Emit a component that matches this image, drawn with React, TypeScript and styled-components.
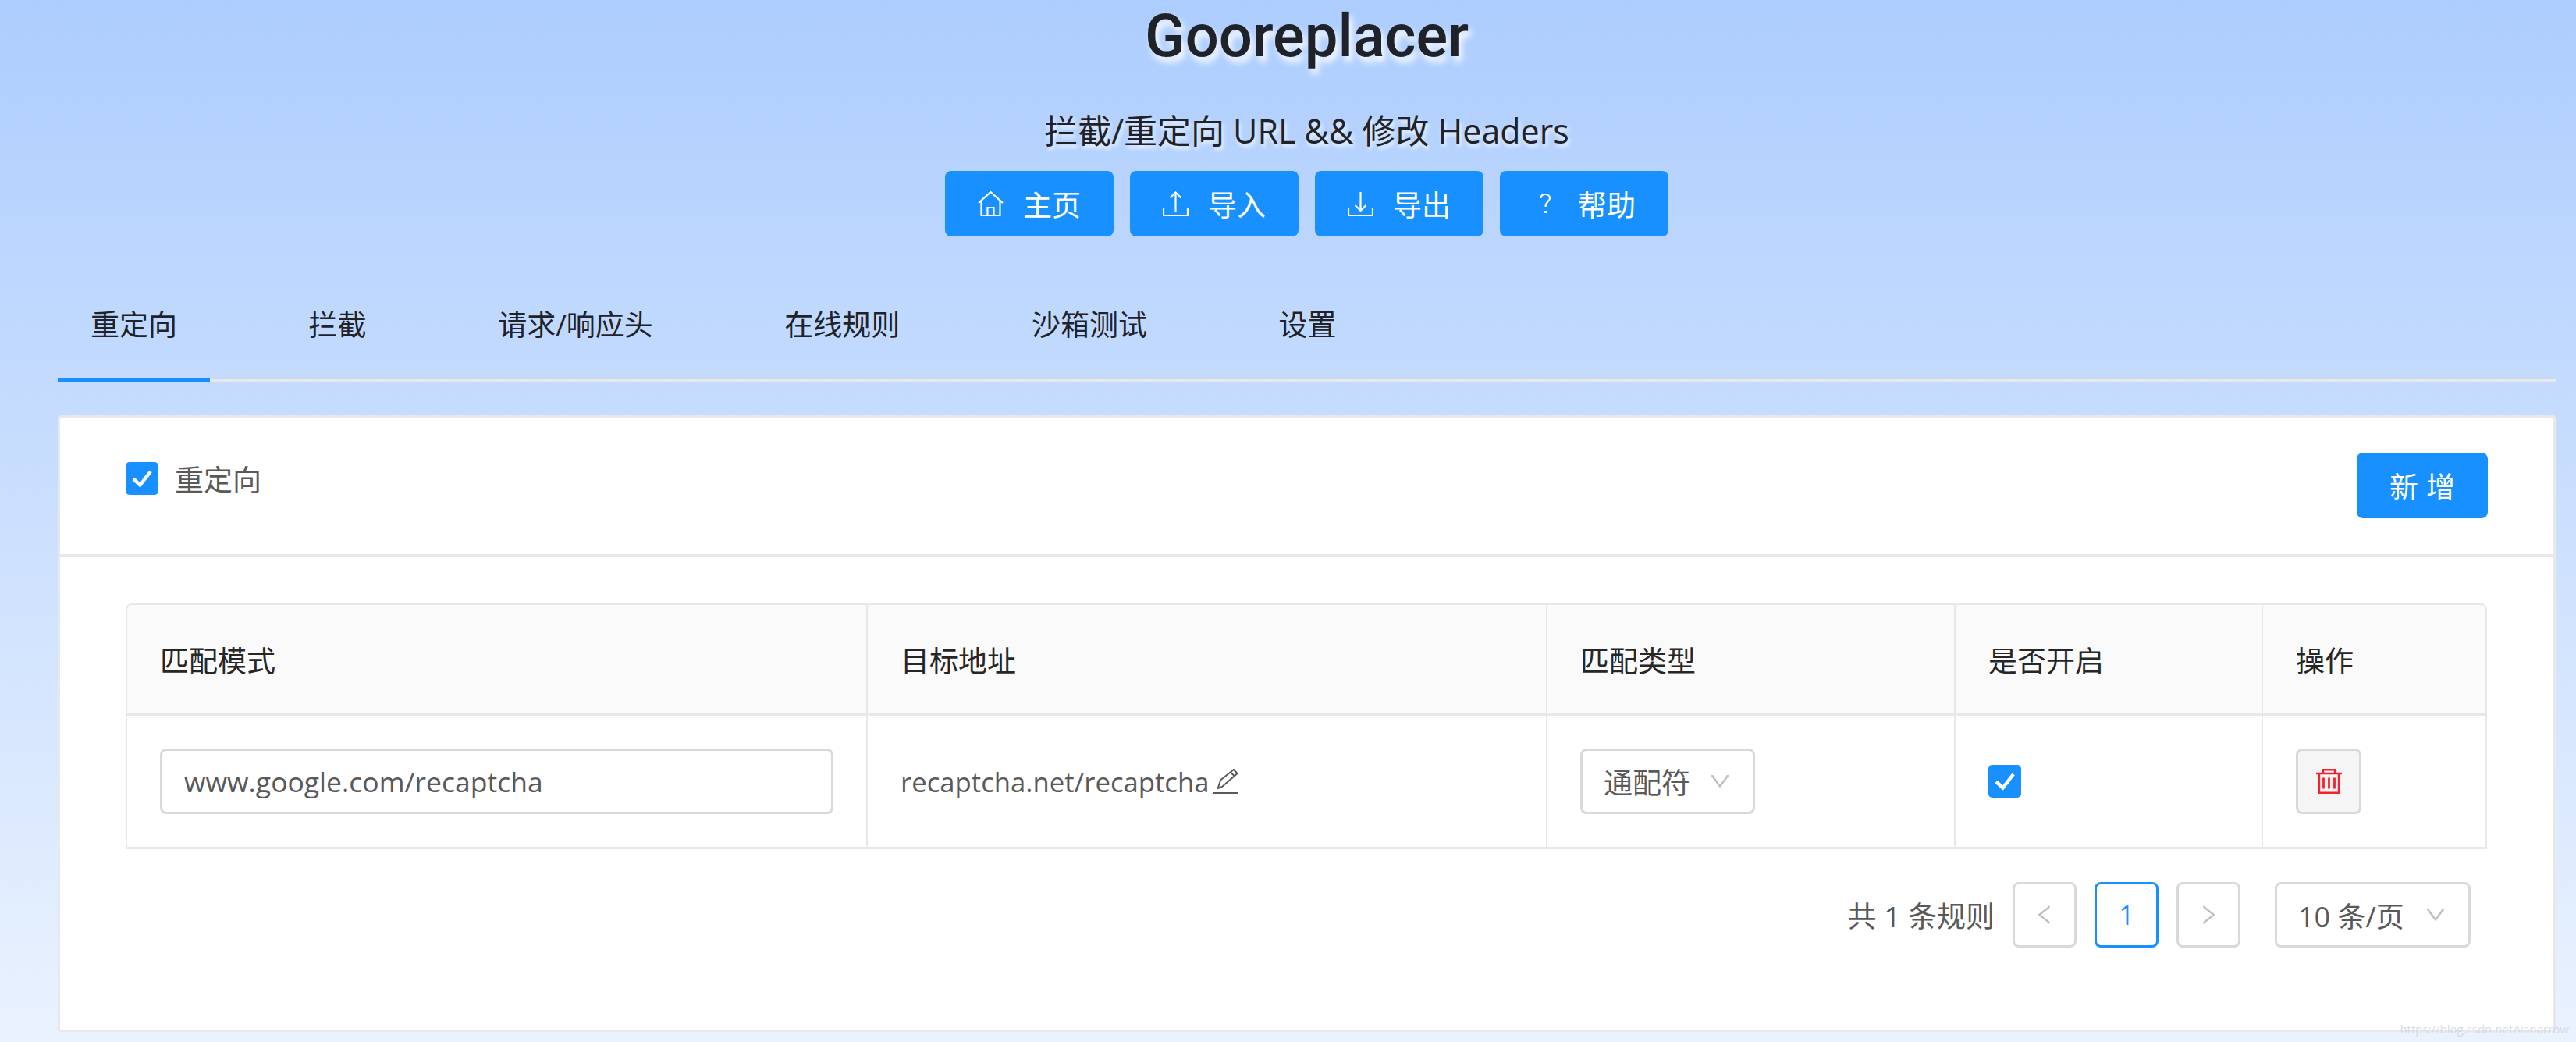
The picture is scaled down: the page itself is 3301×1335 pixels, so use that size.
import React from 'react';
import styled, { createGlobalStyle } from 'styled-components';
import { AiOutlineLeft, AiOutlineRight, AiOutlineDown } from 'react-icons/ai';

const FONT = '"Open Sans", "Noto Sans CJK SC", sans-serif';
const BLUE = '#1890ff';
const LINE = '#e8e8e8';

const GlobalStyle = createGlobalStyle`
  html, body {
    margin: 0;
    padding: 0;
  }
  body {
    font-family: ${FONT};
  }
`;

const Page = styled.div`
  position: relative;
  box-sizing: border-box;
  width: 3301px;
  height: 1335px;
  overflow: hidden;
  padding: 0 26px 13px 74px;
  display: flex;
  flex-direction: column;
  background: linear-gradient(180deg, #adcdfe 0%, #eaf2fe 100%);
`;

// --- Header ---

const Header = styled.header`
  display: flex;
  flex-direction: column;
  align-items: center;
  height: 303px;
`;

const Title = styled.h1`
  margin: 0;
  height: 147px;
  font-family: Roboto, sans-serif;
  font-size: 76px;
  line-height: 92px;
  font-weight: 500;
  color: #1f2329;
  text-shadow: 4px 7px 8px rgba(255, 255, 255, 0.95);
`;

const Subtitle = styled.h2`
  margin: 0;
  height: 72px;
  font-size: 43px;
  line-height: 42px;
  font-weight: 400;
  color: #1f2329;
  text-shadow: 2px 4px 5px rgba(255, 255, 255, 0.85);
`;

const HeaderButtons = styled.div`
  display: flex;
  gap: 21px;
`;

const PrimaryButton = styled.button<{ $width: number }>`
  display: inline-flex;
  align-items: center;
  justify-content: center;
  height: 84px;
  width: ${({ $width }) => $width}px;
  padding: 0;
  border: 0;
  border-radius: 8px;
  background: ${BLUE};
  color: #fff;
  font-family: ${FONT};
  font-size: 37px;
`;

const ButtonGlyph = styled.svg`
  width: 33px;
  height: 32px;
  margin-right: 25px;
  fill: none;
  stroke: #fff;
  stroke-width: 2.2;
`;

// --- Tabs ---

const TabBar = styled.nav`
  display: flex;
  height: 186px;
  box-sizing: border-box;
  border-bottom: 3px solid ${LINE};
  gap: 84.6px;
`;

const Tab = styled.div<{ $active?: boolean }>`
  box-sizing: border-box;
  height: ${({ $active }) => ($active ? '186px' : '183px')};
  padding: 91px 42px 0;
  margin-bottom: -3px;
  display: flex;
  align-items: flex-start;
  font-size: 37px;
  line-height: 44px;
  color: #1f2329;
  border-bottom: ${({ $active }) => ($active ? `5px solid ${BLUE}` : '0')};
`;

// --- Card ---

const Card = styled.section`
  flex: 1;
  margin-top: 43px;
  box-sizing: border-box;
  background: #fff;
  border: 3px solid ${LINE};
  border-radius: 4px;
  display: flex;
  flex-direction: column;
`;

const CardHead = styled.div`
  box-sizing: border-box;
  height: 178px;
  padding: 45px 84px 0 84px;
  border-bottom: 3px solid ${LINE};
  display: flex;
  justify-content: space-between;
  align-items: flex-start;
`;

const CheckLabel = styled.label`
  display: flex;
  align-items: center;
  gap: 21px;
  margin-top: 6px;
  font-size: 37px;
  color: #595959;
`;

const CheckBox = styled.span`
  display: inline-flex;
  width: 42px;
  height: 42px;
  border-radius: 5px;
  background: ${BLUE};
`;

const AddButton = styled(PrimaryButton)`
  letter-spacing: 10px;
  padding-left: 10px;
`;

const CardBody = styled.div`
  flex: 1;
  padding: 60px 84px 0 84px;
`;

// --- Table ---

const Table = styled.div`
  box-sizing: border-box;
  width: 3026px;
  border: solid ${LINE};
  border-width: 2px 2px 3px 2px;
  border-radius: 8px 8px 0 0;
  overflow: hidden;
`;

const TableRow = styled.div<{ $head?: boolean }>`
  display: grid;
  grid-template-columns: 949px 871px 523px 394px 285px;
  height: ${({ $head }) => ($head ? '142px' : '168px')};
  background: ${({ $head }) => ($head ? '#fafafa' : '#fff')};
  border-bottom: ${({ $head }) => ($head ? `3px solid ${LINE}` : '0')};
  box-sizing: border-box;
`;

const Cell = styled.div<{ $head?: boolean }>`
  box-sizing: border-box;
  padding: 0 42px;
  display: flex;
  align-items: center;
  border-right: 2px solid ${LINE};
  font-size: ${({ $head }) => ($head ? '37px' : '34.7px')};
  color: ${({ $head }) => ($head ? '#262626' : '#595959')};

  &:last-child {
    border-right: 0;
  }
`;

const TextInput = styled.div`
  box-sizing: border-box;
  flex: 1;
  height: 84px;
  padding: 0 28px;
  display: flex;
  align-items: center;
  border: 3px solid #d9d9d9;
  border-radius: 8px;
  font-size: 35.5px;
  color: #595959;
`;

const EditGlyph = styled.svg`
  width: 32px;
  height: 32px;
  margin-left: 4px;
  flex: none;
  fill: none;
  stroke: #595959;
  stroke-width: 2;
`;

const SelectBox = styled.div<{ $width: number }>`
  box-sizing: border-box;
  width: ${({ $width }) => $width}px;
  height: 84px;
  padding: 0 26px 0 27px;
  display: flex;
  align-items: center;
  justify-content: space-between;
  border: 3px solid #d9d9d9;
  border-radius: 8px;
  font-size: 37px;
  color: #595959;
`;

const SelectArrow = styled.span`
  display: inline-flex;
  font-size: 32px;
  color: #bfbfbf;
`;

const DeleteButton = styled.button`
  box-sizing: border-box;
  width: 84px;
  height: 84px;
  padding: 0;
  display: flex;
  align-items: center;
  justify-content: center;
  background: #f5f5f5;
  border: 3px solid #d9d9d9;
  border-radius: 8px;
`;

const TrashGlyph = styled.svg`
  width: 33px;
  height: 32px;
  fill: none;
  stroke: #f5222d;
  stroke-width: 2.4;
`;

// --- Pagination ---

const Pager = styled.div`
  display: flex;
  justify-content: flex-end;
  align-items: center;
  margin-top: 42px;
  padding-right: 22px;
  gap: 23px;
`;

const PagerTotal = styled.span`
  font-size: 37px;
  color: #595959;
`;

const PagerItem = styled.div<{ $active?: boolean }>`
  box-sizing: border-box;
  width: 82px;
  height: 84px;
  display: flex;
  align-items: center;
  justify-content: center;
  border: 3px solid ${({ $active }) => ($active ? BLUE : '#d9d9d9')};
  border-radius: 8px;
  color: ${({ $active }) => ($active ? BLUE : '#bfbfbf')};
  font-size: ${({ $active }) => ($active ? '34px' : '32px')};
`;

const PagerSelect = styled(SelectBox)`
  margin-left: 21px;
  font-size: 36px;
`;

const Watermark = styled.div`
  position: absolute;
  right: 9px;
  bottom: 8px;
  font-size: 15px;
  line-height: 18px;
  color: rgba(205, 212, 225, 0.8);
`;

const CheckMark = () => (
  <svg width="42" height="42" viewBox="0 0 42 42">
    <path d="M10 21.5L18.5 29.5L32 12" fill="none" stroke="#fff" strokeWidth="4.5" />
  </svg>
);

const HomeIcon = () => (
  <ButtonGlyph viewBox="0 0 33 32">
    <path d="M1 15L16.5 1L32 15" />
    <path d="M4.5 12V31H28.5V12" />
    <path d="M12.5 31V21H20.5V31" />
  </ButtonGlyph>
);

const UploadIcon = () => (
  <ButtonGlyph viewBox="0 0 33 32">
    <path d="M1 21V31H32V21" />
    <path d="M16.5 26V1.5" />
    <path d="M9.5 8.5L16.5 1.5L23.5 8.5" />
  </ButtonGlyph>
);

const DownloadIcon = () => (
  <ButtonGlyph viewBox="0 0 33 32">
    <path d="M1 21V31H32V21" />
    <path d="M16.5 1V25" />
    <path d="M9.5 18L16.5 25L23.5 18" />
  </ButtonGlyph>
);

const QuestionIcon = () => (
  <ButtonGlyph viewBox="0 0 33 32">
    <path d="M10.5 9C10.5 5.5 13 4 16 4C19.5 4 22 6 22 9C22 13 16.5 13.5 16.5 20" />
    <path d="M16.5 25V28" strokeWidth="3" />
  </ButtonGlyph>
);

const EditIcon = () => (
  <EditGlyph viewBox="0 0 32 32">
    <path d="M0 31H32" />
    <path d="M6.7 25L10 14.5L27 1L31.5 6L12 23Z" />
    <path d="M23 4.5L28 9.5" />
  </EditGlyph>
);

const TrashIcon = () => (
  <TrashGlyph viewBox="0 0 33 32">
    <path d="M9 5V1.2H24V5" />
    <path d="M0 6H33" />
    <path d="M4 6V30.8H29V6" />
    <path d="M9.5 11.5V25.5M16.5 11.5V25.5M23.5 11.5V25.5" strokeWidth="2.8" />
  </TrashGlyph>
);

const navButtons = [
  { icon: <HomeIcon />, label: '主页' },
  { icon: <UploadIcon />, label: '导入' },
  { icon: <DownloadIcon />, label: '导出' },
  { icon: <QuestionIcon />, label: '帮助' },
];

const tabs = ['重定向', '拦截', '请求/响应头', '在线规则', '沙箱测试', '设置'];
const columns = ['匹配模式', '目标地址', '匹配类型', '是否开启', '操作'];

const App: React.FC = () => (
  <>
    <GlobalStyle />
    <Page>
      <Header>
        <Title>Gooreplacer</Title>
        <Subtitle>拦截/重定向 URL &amp;&amp; 修改 Headers</Subtitle>
        <HeaderButtons>
          {navButtons.map((b) => (
            <PrimaryButton key={b.label} $width={216}>
              {b.icon}
              {b.label}
            </PrimaryButton>
          ))}
        </HeaderButtons>
      </Header>

      <TabBar>
        {tabs.map((t, i) => (
          <Tab key={t} $active={i === 0}>
            {t}
          </Tab>
        ))}
      </TabBar>

      <Card>
        <CardHead>
          <CheckLabel>
            <CheckBox>
              <CheckMark />
            </CheckBox>
            重定向
          </CheckLabel>
          <AddButton $width={168}>新增</AddButton>
        </CardHead>
        <CardBody>
          <Table>
            <TableRow $head>
              {columns.map((c) => (
                <Cell key={c} $head>
                  {c}
                </Cell>
              ))}
            </TableRow>
            <TableRow>
              <Cell>
                <TextInput>www.google.com/recaptcha</TextInput>
              </Cell>
              <Cell>
                recaptcha.net/recaptcha
                <EditIcon />
              </Cell>
              <Cell>
                <SelectBox $width={224}>
                  通配符
                  <SelectArrow>
                    <AiOutlineDown />
                  </SelectArrow>
                </SelectBox>
              </Cell>
              <Cell>
                <CheckBox>
                  <CheckMark />
                </CheckBox>
              </Cell>
              <Cell>
                <DeleteButton>
                  <TrashIcon />
                </DeleteButton>
              </Cell>
            </TableRow>
          </Table>
          <Pager>
            <PagerTotal>共 1 条规则</PagerTotal>
            <PagerItem>
              <AiOutlineLeft />
            </PagerItem>
            <PagerItem $active>1</PagerItem>
            <PagerItem>
              <AiOutlineRight />
            </PagerItem>
            <PagerSelect $width={251}>
              10 条/页
              <SelectArrow>
                <AiOutlineDown />
              </SelectArrow>
            </PagerSelect>
          </Pager>
        </CardBody>
      </Card>
      <Watermark>https://blog.csdn.net/vanarrow</Watermark>
    </Page>
  </>
);

export default App;
